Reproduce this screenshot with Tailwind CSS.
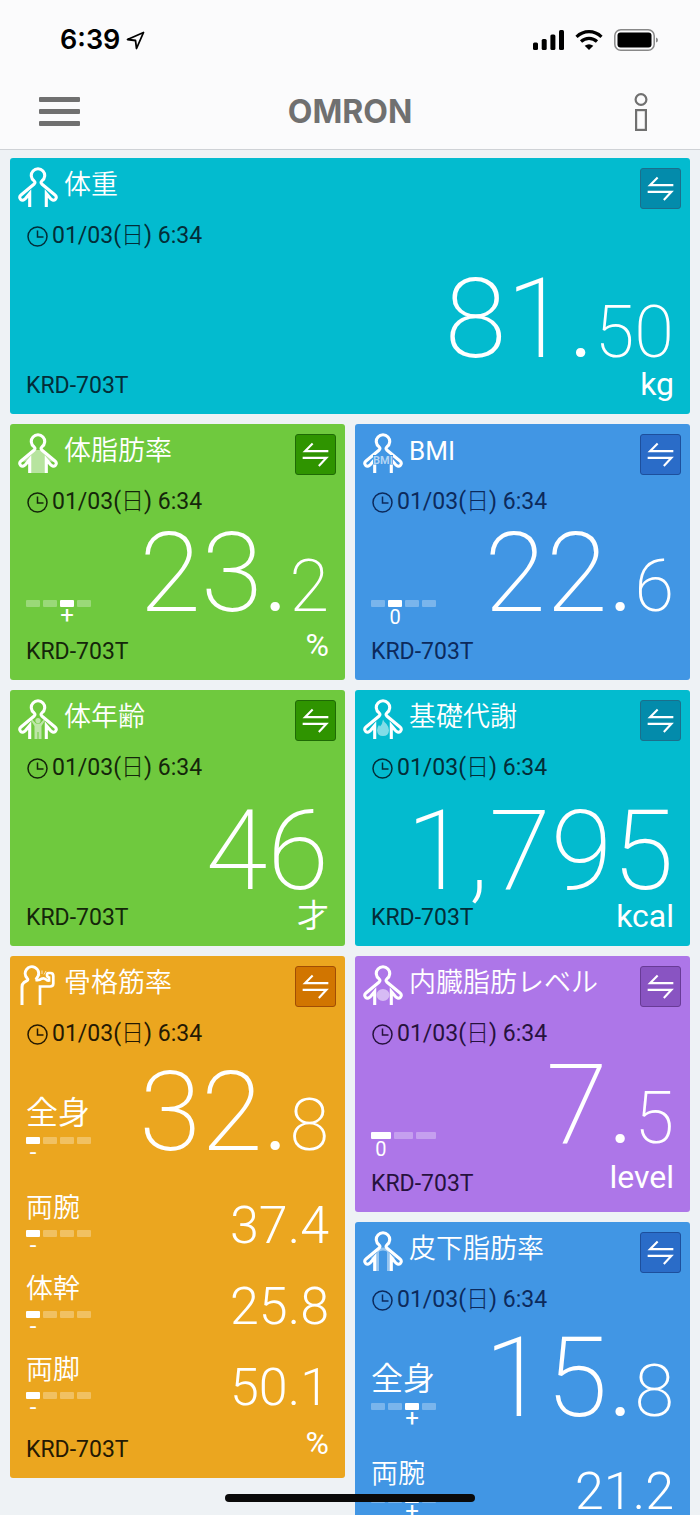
<!DOCTYPE html>
<html lang="ja">
<head>
<meta charset="utf-8">
<meta name="viewport" content="width=device-width, initial-scale=1">
<title>OMRON connect</title>
<script src="https://cdn.jsdelivr.net/npm/@tailwindcss/browser@4"></script>
</head>
<body class="flex h-screen flex-col overflow-hidden bg-[#eef2f5] font-['Roboto','Noto_Sans_CJK_JP',sans-serif] text-white">

<svg class="hidden" aria-hidden="true">
  <symbol id="person" viewBox="0 0 40 40">
    <path d="M11.700 40V26.500L7.500 31.500Q4.800 34.500 2.600 32.300Q.6 30 3 28L16.200 17Q17.800 15.400 16 13.800A6.700 6.700 0 1 1 24 13.800Q22.200 15.400 23.800 17L37 28Q39.400 30 37.400 32.300Q35.200 34.500 32.500 31.500L28.300 26.500V40" fill="none" stroke="#fff" stroke-width="3.100"/>
  </symbol>
  <symbol id="muscle" viewBox="0 0 40 40">
    <path d="M4 40V22Q4 19 6 17.500L9.200 15.500Q10.500 14.500 9 13A6.700 6.700 0 1 1 20.300 10.500Q19 13.500 17.500 14.500" fill="none" stroke="#fff" stroke-width="3"/>
    <path d="M22 40V21.500H32Q35.300 21.500 35.300 18.500V11Q35.300 8 32.500 8H30.500Q29 8 29 10Q29 12 31 12.500V15.500Q29 15.800 28 14.500Q26 12.500 23.500 13.800Q21.500 15.800 17.500 15" fill="none" stroke="#fff" stroke-width="2.700"/>
    <path d="M20.500 8.500L21.800 10.500M24 5.500V9M28 6L26 9.500" fill="none" stroke="#fff" stroke-opacity=".7" stroke-width="1"/>
  </symbol>
  <symbol id="swap" viewBox="0 0 41 41">
    <path d="M34 17H9.500L17.500 9M7 24H32L24 32.500" fill="none" stroke="#fff" stroke-width="2.200"/>
  </symbol>
  <symbol id="clock" viewBox="0 0 21 21">
    <circle cx="10.500" cy="10.500" r="9.500" fill="none" stroke="currentColor" stroke-width="1.500"/>
    <path d="M10.500 4.500V11H16.500" fill="none" stroke="currentColor" stroke-width="1.500"/>
  </symbol>
</svg>

<header class="shrink-0 border-b border-[#cfd2d6] bg-[#fbfbfc]">
  <div class="flex h-20 items-center justify-between pr-[42px] pl-[60px] text-black">
    <div class="flex items-center gap-1.5">
      <span class="font-['Inter'] text-[27px] leading-8 font-semibold">6:39</span>
      <svg class="size-[19px]" viewBox="0 0 19 19" aria-hidden="true"><path d="M17.500 1.500L1.500 8.500L9.500 9.500L10.500 17.500Z" fill="none" stroke="#000" stroke-width="1.800" stroke-linejoin="round"/></svg>
    </div>
    <div class="flex items-center gap-[11px]">
      <svg class="h-5 w-[31px]" viewBox="0 0 31 20" aria-hidden="true"><rect x="0" y="12.500" width="5" height="7.500" rx="1.500"/><rect x="8.700" y="9" width="5" height="11" rx="1.500"/><rect x="17.400" y="4.500" width="5" height="15.500" rx="1.500"/><rect x="26" y="0" width="5" height="20" rx="1.500"/></svg>
      <svg class="h-5 w-7" viewBox="0 0 28 20" aria-hidden="true"><g fill="none" stroke="#000" stroke-width="3.200"><path d="M1.500 6.800Q7 1.700 14 1.700T26.500 6.800"/><path d="M6 11.500Q9.500 8.300 14 8.300T22 11.500"/></g><path d="M14 20L9.700 15.800Q14 12.600 18.300 15.800Z"/></svg>
      <svg class="h-[22px] w-11" viewBox="0 0 44 22" aria-hidden="true"><rect x=".8" y=".8" width="39.400" height="20.400" rx="6" fill="none" stroke="#888" stroke-width="1.500"/><rect x="3.500" y="3.500" width="34" height="15" rx="3"/><path d="M42 8.500Q44 9 44 11T42 13.500Z" fill="#888"/></svg>
    </div>
  </div>
  <div class="grid h-[69px] grid-cols-[1fr_auto_1fr] items-center px-[39px] pb-1.5">
    <button type="button" aria-label="メニュー" class="flex w-[41px] flex-col gap-[7px]">
      <span class="h-[5px] rounded-[1px] bg-[#707070]"></span>
      <span class="h-[5px] rounded-[1px] bg-[#707070]"></span>
      <span class="h-[5px] rounded-[1px] bg-[#707070]"></span>
    </button>
    <h1 class="font-['Inter'] text-[32px] leading-8 font-bold text-[#707070]">OMRON</h1>
    <button type="button" aria-label="お知らせ" class="mr-[13px] justify-self-end">
      <svg class="h-[38px] w-3.5" viewBox="0 0 14 38" fill="none" stroke="#707070" stroke-width="2.200" aria-hidden="true"><circle cx="7" cy="6.500" r="5.400"/><rect x="2.100" y="17.100" width="9.800" height="19.800"/></svg>
    </button>
  </div>
</header>

<main class="flex min-h-0 flex-1 flex-col gap-2.5 overflow-y-auto px-2.5 pt-2 [scrollbar-width:none]">

  <article class="flex h-64 shrink-0 flex-col rounded-[3px] bg-[#03bbcf] text-[#032d38]">
    <div class="flex h-[66px] items-start gap-1.5 pr-[9px] pl-2 text-white">
      <svg class="mt-[9px] size-10" aria-hidden="true"><use href="#person"/></svg>
      <h2 class="mt-[13px] text-[27px] leading-7 font-[350]">体重</h2>
      <button type="button" aria-label="切り替え" class="mt-2.5 ml-auto size-[41px] rounded-[3px] border border-[#1b6f8c] bg-[#038bab]"><svg class="size-[39px]" aria-hidden="true"><use href="#swap"/></svg></button>
    </div>
    <p class="flex h-6 items-center gap-1 pl-[17px] text-[23px]"><svg class="size-[21px]" aria-hidden="true"><use href="#clock"/></svg><time>01/03(<span class="font-light">日</span>) 6:34</time></p>
    <div class="flex justify-end px-4 pt-[29px] text-white">
      <p class="flex items-baseline text-[112px] leading-[84px] font-extralight">81<span class="font-light">.</span><span class="text-[72px] leading-[50px]">50</span></p>
    </div>
    <div class="mt-auto flex items-end justify-between px-4">
      <span class="pb-[17px] text-[23px] leading-[22px]">KRD-703T</span>
      <span class="pb-3.5 text-[32px] leading-8 text-white">kg</span>
    </div>
  </article>

  <div class="grid grid-cols-2 items-start gap-2.5">
    <div class="flex flex-col gap-2.5">

      <article class="flex h-64 flex-col rounded-[3px] bg-[#6fc93e] text-[#14260a]">
        <div class="flex h-[66px] items-start gap-1.5 pr-[9px] pl-2 text-white">
          <svg class="mt-[9px] size-10" viewBox="0 0 40 40" aria-hidden="true"><path d="M15 17H25L37 29L29 28V40H11V28L3 29Z" fill="#fff" fill-opacity=".5"/><use href="#person"/></svg>
          <h2 class="mt-[13px] text-[27px] leading-7 font-[350]">体脂肪率</h2>
          <button type="button" aria-label="切り替え" class="mt-2.5 ml-auto size-[41px] rounded-[3px] border border-[#1f6a05] bg-[#2f9400]"><svg class="size-[39px]" aria-hidden="true"><use href="#swap"/></svg></button>
        </div>
        <p class="flex h-6 items-center gap-1 pl-[17px] text-[23px]"><svg class="size-[21px]" aria-hidden="true"><use href="#clock"/></svg><time>01/03(<span class="font-light">日</span>) 6:34</time></p>
        <div class="flex justify-between px-4 pt-[17px] text-white">
          <div class="mt-[69px] flex w-[65px] gap-[3px] text-center text-[24px] leading-4">
            <div class="flex-1"><div class="h-[7px] rounded-[1px] bg-white/30"></div></div>
            <div class="flex-1"><div class="h-[7px] rounded-[1px] bg-white/30"></div></div>
            <div class="flex-1"><div class="h-[7px] rounded-[1px] bg-white"></div>+</div>
            <div class="flex-1"><div class="h-[7px] rounded-[1px] bg-white/30"></div></div>
          </div>
          <p class="flex items-baseline self-start text-[112px] leading-[84px] font-extralight">23<span class="font-light">.</span><span class="text-[72px] leading-[50px]">2</span></p>
        </div>
        <div class="mt-auto flex items-end justify-between px-4">
          <span class="pb-[17px] text-[23px] leading-[22px]">KRD-703T</span>
          <span class="pb-[19px] text-[32px] leading-8 text-white">%</span>
        </div>
      </article>

      <article class="flex h-64 flex-col rounded-[3px] bg-[#6fc93e] text-[#14260a]">
        <div class="flex h-[66px] items-start gap-1.5 pr-[9px] pl-2 text-white">
          <svg class="mt-[9px] size-10" viewBox="0 0 40 40" aria-hidden="true"><g opacity=".55" fill="#fff"><circle cx="20" cy="21.500" r="2.600"/><path d="M13 21.500L14.200 20.500L18 24.500H22L25.800 20.500L27 21.500L23.500 27V40H20.500V33H19.500V40H16.500V27Z"/></g><use href="#person"/></svg>
          <h2 class="mt-[13px] text-[27px] leading-7 font-[350]">体年齢</h2>
          <button type="button" aria-label="切り替え" class="mt-2.5 ml-auto size-[41px] rounded-[3px] border border-[#1f6a05] bg-[#2f9400]"><svg class="size-[39px]" aria-hidden="true"><use href="#swap"/></svg></button>
        </div>
        <p class="flex h-6 items-center gap-1 pl-[17px] text-[23px]"><svg class="size-[21px]" aria-hidden="true"><use href="#clock"/></svg><time>01/03(<span class="font-light">日</span>) 6:34</time></p>
        <div class="flex justify-end px-4 pt-[29px] text-white">
          <p class="text-[112px] leading-[84px] font-extralight">46</p>
        </div>
        <div class="mt-auto flex items-end justify-between px-4">
          <span class="pb-[17px] text-[23px] leading-[22px]">KRD-703T</span>
          <span class="pb-3.5 text-[32px] leading-8 text-white">才</span>
        </div>
      </article>

      <article class="flex h-[522px] flex-col rounded-[3px] bg-[#eba61f] text-[#241903]">
        <div class="flex h-[66px] items-start gap-1.5 pr-[9px] pl-2 text-white">
          <svg class="mt-[9px] size-10" aria-hidden="true"><use href="#muscle"/></svg>
          <h2 class="mt-[13px] text-[27px] leading-7 font-[350]">骨格筋率</h2>
          <button type="button" aria-label="切り替え" class="mt-2.5 ml-auto size-[41px] rounded-[3px] border border-[#a04d05] bg-[#d17500]"><svg class="size-[39px]" aria-hidden="true"><use href="#swap"/></svg></button>
        </div>
        <p class="flex h-6 items-center gap-1 pl-[17px] text-[23px]"><svg class="size-[21px]" aria-hidden="true"><use href="#clock"/></svg><time>01/03(<span class="font-light">日</span>) 6:34</time></p>
        <div class="flex justify-between px-4 pt-6 text-white">
          <div class="pt-[27px]">
            <h3 class="text-[32px] leading-8 font-[350]">全身</h3>
            <div class="mt-2 flex w-[65px] gap-[3px] text-center text-[24px] leading-4">
              <div class="flex-1"><div class="h-[7px] rounded-[1px] bg-white"></div>-</div>
              <div class="flex-1"><div class="h-[7px] rounded-[1px] bg-white/30"></div></div>
              <div class="flex-1"><div class="h-[7px] rounded-[1px] bg-white/30"></div></div>
              <div class="flex-1"><div class="h-[7px] rounded-[1px] bg-white/30"></div></div>
            </div>
          </div>
          <p class="flex items-baseline self-start text-[112px] leading-[84px] font-extralight">32<span class="font-light">.</span><span class="text-[72px] leading-[50px]">8</span></p>
        </div>
        <div class="mt-[34px] flex flex-col gap-[22px] px-4 text-white">
          <div class="flex justify-between">
            <div>
              <h3 class="text-[27px] leading-7 font-[350]">両腕</h3>
              <div class="mt-2 flex w-[65px] gap-[3px] text-center text-[24px] leading-4">
                <div class="flex-1"><div class="h-[7px] rounded-[1px] bg-white"></div>-</div>
                <div class="flex-1"><div class="h-[7px] rounded-[1px] bg-white/30"></div></div>
                <div class="flex-1"><div class="h-[7px] rounded-[1px] bg-white/30"></div></div>
                <div class="flex-1"><div class="h-[7px] rounded-[1px] bg-white/30"></div></div>
              </div>
            </div>
            <p class="pt-3 text-[52px] leading-10 font-light">37.4</p>
          </div>
          <div class="flex justify-between">
            <div>
              <h3 class="text-[27px] leading-7 font-[350]">体幹</h3>
              <div class="mt-2 flex w-[65px] gap-[3px] text-center text-[24px] leading-4">
                <div class="flex-1"><div class="h-[7px] rounded-[1px] bg-white"></div>-</div>
                <div class="flex-1"><div class="h-[7px] rounded-[1px] bg-white/30"></div></div>
                <div class="flex-1"><div class="h-[7px] rounded-[1px] bg-white/30"></div></div>
                <div class="flex-1"><div class="h-[7px] rounded-[1px] bg-white/30"></div></div>
              </div>
            </div>
            <p class="pt-3 text-[52px] leading-10 font-light">25.8</p>
          </div>
          <div class="flex justify-between">
            <div>
              <h3 class="text-[27px] leading-7 font-[350]">両脚</h3>
              <div class="mt-2 flex w-[65px] gap-[3px] text-center text-[24px] leading-4">
                <div class="flex-1"><div class="h-[7px] rounded-[1px] bg-white"></div>-</div>
                <div class="flex-1"><div class="h-[7px] rounded-[1px] bg-white/30"></div></div>
                <div class="flex-1"><div class="h-[7px] rounded-[1px] bg-white/30"></div></div>
                <div class="flex-1"><div class="h-[7px] rounded-[1px] bg-white/30"></div></div>
              </div>
            </div>
            <p class="pt-3 text-[52px] leading-10 font-light">50.1</p>
          </div>
        </div>
        <div class="mt-auto flex items-end justify-between px-4">
          <span class="pb-[17px] text-[23px] leading-[22px]">KRD-703T</span>
          <span class="pb-[19px] text-[32px] leading-8 text-white">%</span>
        </div>
      </article>
    </div>

    <div class="flex flex-col gap-2.5">

      <article class="flex h-64 flex-col rounded-[3px] bg-[#4196e4] text-[#0c2a5c]">
        <div class="flex h-[66px] items-start gap-1.5 pr-[9px] pl-2 text-white">
          <svg class="mt-[9px] size-10" viewBox="0 0 40 40" aria-hidden="true"><use href="#person"/><rect x="10" y="22" width="20" height="9.500" fill="#4196e4"/><text x="20" y="31" text-anchor="middle" font-family="Roboto" font-size="11" font-weight="700" fill="#b3d5f4">BMI</text></svg>
          <h2 class="mt-[13px] text-[26px] leading-7">BMI</h2>
          <button type="button" aria-label="切り替え" class="mt-2.5 ml-auto size-[41px] rounded-[3px] border border-[#1d4f9c] bg-[#2a6cc8]"><svg class="size-[39px]" aria-hidden="true"><use href="#swap"/></svg></button>
        </div>
        <p class="flex h-6 items-center gap-1 pl-[17px] text-[23px]"><svg class="size-[21px]" aria-hidden="true"><use href="#clock"/></svg><time>01/03(<span class="font-light">日</span>) 6:34</time></p>
        <div class="flex justify-between px-4 pt-[17px] text-white">
          <div class="mt-[69px] flex w-[65px] gap-[3px] text-center text-[20px] leading-5">
            <div class="flex-1"><div class="h-[7px] rounded-[1px] bg-white/30"></div></div>
            <div class="flex-1"><div class="h-[7px] rounded-[1px] bg-white"></div>0</div>
            <div class="flex-1"><div class="h-[7px] rounded-[1px] bg-white/30"></div></div>
            <div class="flex-1"><div class="h-[7px] rounded-[1px] bg-white/30"></div></div>
          </div>
          <p class="flex items-baseline self-start text-[112px] leading-[84px] font-extralight">22<span class="font-light">.</span><span class="text-[72px] leading-[50px]">6</span></p>
        </div>
        <div class="mt-auto px-4 pb-[17px] text-[23px] leading-[22px]">KRD-703T</div>
      </article>

      <article class="flex h-64 flex-col rounded-[3px] bg-[#03bbcf] text-[#032d38]">
        <div class="flex h-[66px] items-start gap-1.5 pr-[9px] pl-2 text-white">
          <svg class="mt-[9px] size-10" viewBox="0 0 40 40" aria-hidden="true"><path d="M20 20.500Q21 23 23.500 25Q26 28 26 31.500Q25.500 37 20 37T14 31.500Q14 28 16 26L17 27.500Q19.500 25 20 20.500Z" fill="#fff" fill-opacity=".5"/><use href="#person"/></svg>
          <h2 class="mt-[13px] text-[27px] leading-7 font-[350]">基礎代謝</h2>
          <button type="button" aria-label="切り替え" class="mt-2.5 ml-auto size-[41px] rounded-[3px] border border-[#1b6f8c] bg-[#038bab]"><svg class="size-[39px]" aria-hidden="true"><use href="#swap"/></svg></button>
        </div>
        <p class="flex h-6 items-center gap-1 pl-[17px] text-[23px]"><svg class="size-[21px]" aria-hidden="true"><use href="#clock"/></svg><time>01/03(<span class="font-light">日</span>) 6:34</time></p>
        <div class="flex justify-end px-4 pt-[29px] text-white">
          <p class="text-[112px] leading-[84px] font-extralight">1,795</p>
        </div>
        <div class="mt-auto flex items-end justify-between px-4">
          <span class="pb-[17px] text-[23px] leading-[22px]">KRD-703T</span>
          <span class="pb-3.5 text-[32px] leading-8 text-white">kcal</span>
        </div>
      </article>

      <article class="flex h-64 flex-col rounded-[3px] bg-[#ad76e8] text-[#26123d]">
        <div class="flex h-[66px] items-start gap-1.5 pr-[9px] pl-2 text-white">
          <svg class="mt-[9px] size-10" viewBox="0 0 40 40" aria-hidden="true"><ellipse cx="20" cy="30" rx="6.500" ry="6" fill="#fff" fill-opacity=".5"/><use href="#person"/></svg>
          <h2 class="mt-[13px] text-[27px] leading-7 font-[350]">内臓脂肪レベル</h2>
          <button type="button" aria-label="切り替え" class="mt-2.5 ml-auto size-[41px] rounded-[3px] border border-[#683b96] bg-[#8954c2]"><svg class="size-[39px]" aria-hidden="true"><use href="#swap"/></svg></button>
        </div>
        <p class="flex h-6 items-center gap-1 pl-[17px] text-[23px]"><svg class="size-[21px]" aria-hidden="true"><use href="#clock"/></svg><time>01/03(<span class="font-light">日</span>) 6:34</time></p>
        <div class="flex justify-between px-4 pt-[17px] text-white">
          <div class="mt-[69px] flex w-[65px] gap-[3px] text-center text-[20px] leading-5">
            <div class="flex-1"><div class="h-[7px] rounded-[1px] bg-white"></div>0</div>
            <div class="flex-1"><div class="h-[7px] rounded-[1px] bg-white/30"></div></div>
            <div class="flex-1"><div class="h-[7px] rounded-[1px] bg-white/30"></div></div>
          </div>
          <p class="flex items-baseline self-start text-[112px] leading-[84px] font-extralight">7<span class="font-light">.</span><span class="text-[72px] leading-[50px]">5</span></p>
        </div>
        <div class="mt-auto flex items-end justify-between px-4">
          <span class="pb-[17px] text-[23px] leading-[22px]">KRD-703T</span>
          <span class="pb-[19px] text-[32px] leading-8 text-white">level</span>
        </div>
      </article>

      <article class="flex h-[522px] flex-col rounded-[3px] bg-[#4196e4] text-[#0c2a5c]">
        <div class="flex h-[66px] items-start gap-1.5 pr-[9px] pl-2 text-white">
          <svg class="mt-[9px] size-10" viewBox="0 0 40 40" aria-hidden="true"><path d="M14.500 40V23L9 28M25.500 40V23L31 28M14 20Q20 16 26 20" fill="none" stroke="#fff" stroke-opacity=".45" stroke-width="3"/><use href="#person"/></svg>
          <h2 class="mt-[13px] text-[27px] leading-7 font-[350]">皮下脂肪率</h2>
          <button type="button" aria-label="切り替え" class="mt-2.5 ml-auto size-[41px] rounded-[3px] border border-[#1d4f9c] bg-[#2a6cc8]"><svg class="size-[39px]" aria-hidden="true"><use href="#swap"/></svg></button>
        </div>
        <p class="flex h-6 items-center gap-1 pl-[17px] text-[23px]"><svg class="size-[21px]" aria-hidden="true"><use href="#clock"/></svg><time>01/03(<span class="font-light">日</span>) 6:34</time></p>
        <div class="flex justify-between px-4 pt-6 text-white">
          <div class="pt-[27px]">
            <h3 class="text-[32px] leading-8 font-[350]">全身</h3>
            <div class="mt-2 flex w-[65px] gap-[3px] text-center text-[24px] leading-4">
              <div class="flex-1"><div class="h-[7px] rounded-[1px] bg-white/30"></div></div>
              <div class="flex-1"><div class="h-[7px] rounded-[1px] bg-white/30"></div></div>
              <div class="flex-1"><div class="h-[7px] rounded-[1px] bg-white"></div>+</div>
              <div class="flex-1"><div class="h-[7px] rounded-[1px] bg-white/30"></div></div>
            </div>
          </div>
          <p class="flex items-baseline self-start text-[112px] leading-[84px] font-extralight">15<span class="font-light">.</span><span class="text-[72px] leading-[50px]">8</span></p>
        </div>
        <div class="mt-[34px] flex justify-between px-4 text-white">
          <div>
            <h3 class="text-[27px] leading-7 font-[350]">両腕</h3>
            <div class="mt-2 flex w-[65px] gap-[3px] text-center text-[24px] leading-4">
              <div class="flex-1"><div class="h-[7px] rounded-[1px] bg-white/30"></div></div>
              <div class="flex-1"><div class="h-[7px] rounded-[1px] bg-white/30"></div></div>
              <div class="flex-1"><div class="h-[7px] rounded-[1px] bg-white"></div>+</div>
              <div class="flex-1"><div class="h-[7px] rounded-[1px] bg-white/30"></div></div>
            </div>
          </div>
          <p class="pt-3 text-[52px] leading-10 font-light">21.2</p>
        </div>
      </article>
    </div>
  </div>
</main>

<div class="fixed bottom-[13px] left-1/2 h-2 w-[250px] -translate-x-1/2 rounded-full bg-[#0a0a0a]"></div>
</body>
</html>
